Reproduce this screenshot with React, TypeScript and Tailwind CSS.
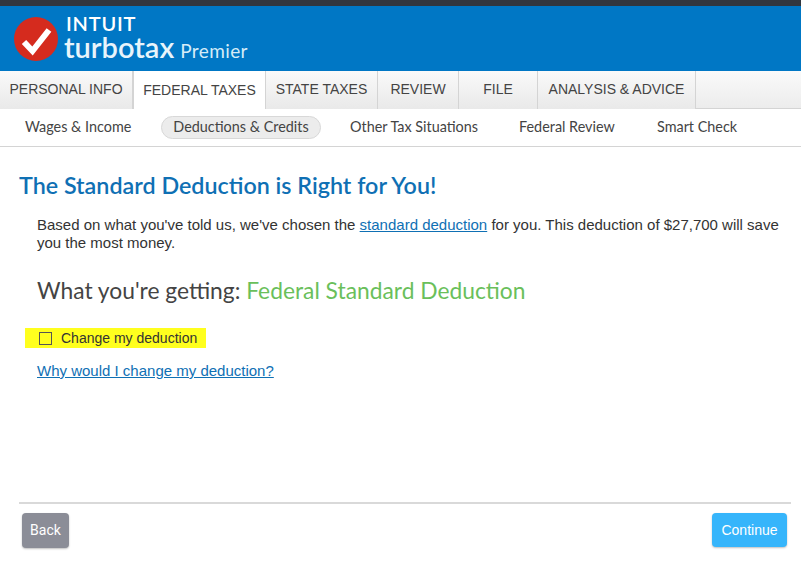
export default function App() {
  const tabs = [
    { label: "PERSONAL INFO", w: "w-[133px]" },
    { label: "FEDERAL TAXES", w: "w-[133px]", active: true },
    { label: "STATE TAXES", w: "w-[112px]" },
    { label: "REVIEW", w: "w-[81px]" },
    { label: "FILE", w: "w-[79px]" },
    { label: "ANALYSIS & ADVICE", w: "w-[158px]" },
  ];
  return (
    <div className="w-[801px] h-[563px] bg-white overflow-hidden flex flex-col font-['Liberation_Sans',sans-serif] text-[#333]">
      <div className="h-[6px] bg-[#32363e]" />
      <header className="h-[65px] bg-[#0077c5] flex items-center pl-[14px] text-white">
        <svg width="44" height="44" viewBox="0 0 44 44" className="shrink-0">
          <circle cx="22" cy="22" r="22" fill="#d52b1e" />
          <path d="M10 25 L18.5 34 L35 13" fill="none" stroke="#fff" strokeWidth="6" strokeLinejoin="miter" />
        </svg>
        <div className="ml-[6px] flex flex-col font-['Lato',sans-serif]">
          <span className="text-[20px] leading-[22px] font-semibold tracking-[0.8px] ml-[2px] mt-[-2px]">INTUIT</span>
          <div className="flex items-baseline leading-[25px]">
            <span className="text-[29px] font-semibold text-[#e8f4fb]">turbotax</span>
            <span className="text-[19px] ml-[6px] text-[#d6ecf8] tracking-[0.4px]">Premier</span>
          </div>
        </div>
      </header>
      <nav className="h-[38px] flex bg-gradient-to-b from-[#fafafa] to-[#ececec] border-b border-[#d4d4d4]">
        {tabs.map((t) => (
          <div
            key={t.label}
            className={
              t.w +
              " h-[38px] pb-[1px] flex items-center justify-center text-[14px] text-[#444] border-r border-[#d4d4d4] " +
              (t.active ? "bg-white pt-[1px] border-l" : "bg-gradient-to-b from-[#fafafa] to-[#e9e9e9]")
            }
          >
            {t.label}
          </div>
        ))}
      </nav>
      <div className="h-[38px] pb-[1px] flex items-center border-b border-[#d4d4d4] font-['Lato',sans-serif] text-[14.4px] text-[#444] pl-[25px]">
        <span className="w-[136px]">Wages &amp; Income</span>
        <span className="w-[189px] pr-[29px]">
          <span className="h-[23px] w-[160px] rounded-full bg-[#ececec] border border-[#d8d8d8] flex items-center justify-center">
            Deductions &amp; Credits
          </span>
        </span>
        <span className="w-[169px]">Other Tax Situations</span>
        <span className="w-[138px]">Federal Review</span>
        <span>Smart Check</span>
      </div>
      <main className="flex-1 flex flex-col px-[19px]">
        <h1 className="mt-[25px] text-[23.3px] leading-[26px] font-semibold text-[#0f70b4] font-['Lato',sans-serif]">
          The Standard Deduction is Right for You!
        </h1>
        <div className="pl-[18px]">
          <p className="mt-[18px] text-[15px] leading-[18px] text-[#333]">
            Based on what you've told us, we've chosen the{" "}
            <a className="text-[#0f70b4] underline">standard deduction</a> for you. This deduction of $27,700 will save
            you the most money.
          </p>
          <p className="mt-[23px] text-[22.8px] leading-[30px] font-['Lato',sans-serif] text-[#444]">
            What you're getting: <span className="text-[#6abf5b]">Federal Standard Deduction</span>
          </p>
        </div>
        <div className="mt-[23px] ml-[6px] w-[181px] h-[20px] bg-[#ffff1e] flex items-center pl-[14px] text-[14px] text-[#333]">
          <span className="w-[13px] h-[13px] border border-[#555] mr-[9px]" />
          Change my deduction
        </div>
        <a className="mt-[14px] ml-[18px] text-[15px] leading-[18px] text-[#0f70b4] underline w-fit">
          Why would I change my deduction?
        </a>
        <div className="mt-[122px] h-[2px] bg-[#d9d9d9] w-[772px]" />
        <div className="mt-[9px] flex justify-between pl-[3px] w-[768px]">
          <button className="w-[47px] h-[35px] rounded-[4px] bg-[#8b8d97] text-white text-[14px] font-['Roboto',sans-serif] shadow-[0_1px_2px_rgba(0,0,0,0.25)]">
            Back
          </button>
          <button className="w-[75px] h-[34px] rounded-[4px] bg-[#36b5fb] text-white text-[14px] shadow-[0_1px_2px_rgba(0,0,0,0.25)]">
            Continue
          </button>
        </div>
      </main>
    </div>
  );
}
